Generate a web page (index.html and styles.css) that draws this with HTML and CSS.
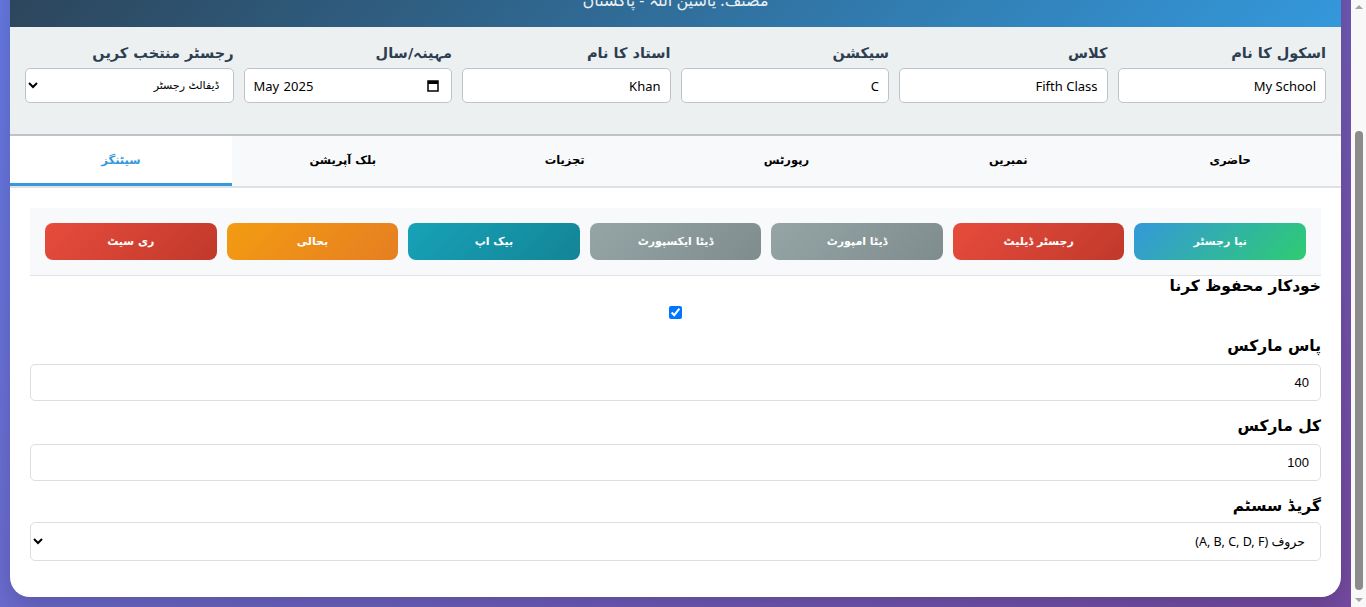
FILE: index.html
```html
<!DOCTYPE html>
<html lang="ur" dir="rtl">
<head>
<meta charset="UTF-8">
<title>اسکول رجسٹر</title>
<link rel="stylesheet" href="styles.css">
</head>
<body>
<div class="container">
  <header class="header">
    <h1 class="title">اسکول حاضری و نمبر رجسٹر</h1>
    <p class="subtitle">طلباء کی حاضری، نمبرات اور رپورٹس کا مکمل نظام</p>
    <p class="author">مصنف: یاسین اللہ - پاکستان</p>
  </header>

  <section class="controls">
    <div class="control-group">
      <label class="control-label">اسکول کا نام</label>
      <input class="control-input" type="text" value="My School">
    </div>
    <div class="control-group">
      <label class="control-label">کلاس</label>
      <input class="control-input" type="text" value="Fifth Class">
    </div>
    <div class="control-group">
      <label class="control-label">سیکشن</label>
      <input class="control-input" type="text" value="C">
    </div>
    <div class="control-group">
      <label class="control-label">استاد کا نام</label>
      <input class="control-input" type="text" value="Khan">
    </div>
    <div class="control-group">
      <label class="control-label">مہینہ/سال</label>
      <div class="control-input month-field">
        <span class="month-value">May 2025</span>
        <svg class="cal-icon" width="12" height="13" viewBox="0 0 12 13" aria-hidden="true">
          <rect x="1" y="2" width="10" height="10" fill="none" stroke="#000" stroke-width="1.5"/>
          <rect x="1" y="2" width="10" height="3" fill="#000"/>
        </svg>
      </div>
    </div>
    <div class="control-group">
      <label class="control-label">رجسٹر منتخب کریں</label>
      <select class="control-input control-select">
        <option>ڈیفالٹ رجسٹر</option>
      </select>
    </div>
  </section>

  <nav class="tabs">
    <button class="tab">حاضری</button>
    <button class="tab">نمبریں</button>
    <button class="tab">رپورٹس</button>
    <button class="tab">تجزیات</button>
    <button class="tab">بلک آپریشن</button>
    <button class="tab tab-active">سیٹنگز</button>
  </nav>

  <main class="tab-content">
    <div class="actions">
      <button class="action-btn btn-new">نیا رجسٹر</button>
      <button class="action-btn btn-danger">رجسٹر ڈیلیٹ</button>
      <button class="action-btn btn-gray">ڈیٹا امپورٹ</button>
      <button class="action-btn btn-gray">ڈیٹا ایکسپورٹ</button>
      <button class="action-btn btn-info">بیک اپ</button>
      <button class="action-btn btn-warning">بحالی</button>
      <button class="action-btn btn-danger">ری سیٹ</button>
    </div>

    <div class="setting-item">
      <label class="setting-label">خودکار محفوظ کرنا</label>
      <div class="check-row">
        <input class="setting-check" type="checkbox" checked>
      </div>
    </div>
    <div class="setting-item">
      <label class="setting-label">پاس مارکس</label>
      <input class="setting-input" type="number" value="40">
    </div>
    <div class="setting-item">
      <label class="setting-label">کل مارکس</label>
      <input class="setting-input" type="number" value="100">
    </div>
    <div class="setting-item">
      <label class="setting-label setting-label-tight">گریڈ سسٹم</label>
      <select class="setting-input setting-select">
        <option>حروف (A, B, C, D, F)</option>
        <option>فیصد</option>
      </select>
    </div>
  </main>
</div>

<div class="scrollbar" aria-hidden="true">
  <span class="sb-arrow sb-up"></span>
  <span class="sb-thumb"></span>
  <span class="sb-arrow sb-down"></span>
</div>
<script src="script.js"></script>
</body>
</html>
```

FILE: styles.css
```css
* {
  box-sizing: border-box;
}

html {
  background: #6c5fc0;
}

body {
  margin: 0;
  padding: 10px 25px 10px 10px;
  font-family: "Noto Sans", "DejaVu Sans", sans-serif;
  background: linear-gradient(135deg, #667eea 0%, #764ba2 100%);
  min-height: 100vh;
}

/* imitation of the window scrollbar, drawn over the page edge */
.scrollbar {
  position: fixed;
  top: 0;
  right: 0;
  bottom: 0;
  width: 15px;
  background: #f8f8f8;
  display: flex;
  flex-direction: column;
  align-items: center;
}

.sb-arrow {
  width: 0;
  height: 0;
  border-left: 4px solid transparent;
  border-right: 4px solid transparent;
}

.sb-up {
  margin-top: 5px;
  border-bottom: 4px solid #a3a3a3;
}

.sb-down {
  margin-bottom: 5px;
  border-top: 4px solid #a3a3a3;
}

.sb-thumb {
  flex: 1;
  width: 8px;
  margin: 122px 0 8px;
  background: #8b8b8b;
  border-radius: 4px;
}

.container {
  background: #fff;
  border-radius: 20px;
  overflow: hidden;
  box-shadow: 0 10px 30px rgba(0, 0, 0, 0.2);
}

.header {
  background: linear-gradient(135deg, #2c3e50 0%, #3498db 100%);
  color: #fff;
  text-align: center;
  padding: 22px 20px 15px;
}

.title {
  margin: 0 0 10px;
  font-size: 30px;
  line-height: 44px;
}

.subtitle {
  margin: 0 0 12px;
  font-size: 16px;
  line-height: 26px;
  opacity: 0.9;
}

.author {
  margin: 0;
  font-size: 16px;
  line-height: 24px;
  opacity: 0.9;
}

.controls {
  background: #ecf0f1;
  padding: 16px 15px 31px;
  border-bottom: 2px solid #bdc3c7;
  display: grid;
  grid-template-columns: repeat(6, 1fr);
  gap: 10px;
}

.control-group {
  display: flex;
  flex-direction: column;
}

.control-label {
  font-family: "DejaVu Sans", sans-serif;
  font-weight: bold;
  font-size: 14.5px;
  line-height: 20px;
  color: #2c3e50;
  margin-bottom: 5px;
}

.control-input {
  width: 100%;
  height: 35px;
  padding: 6px 9px;
  border: 1px solid #bdc3c7;
  border-radius: 5px;
  background: #fff;
  font-family: "Noto Sans", "DejaVu Sans", sans-serif;
  font-size: 13px;
  color: #000;
}

.month-field {
  direction: ltr;
  display: flex;
  align-items: center;
  justify-content: space-between;
  padding: 0 12px 0 9px;
}

.month-value {
  word-spacing: 1px;
}

.cal-icon {
  display: block;
}

.control-select {
  font-family: "DejaVu Sans", sans-serif;
  font-size: 11px;
}

.tabs {
  display: flex;
  background: #f8f9fa;
  border-bottom: 2px solid #dee2e6;
}

.tab {
  flex: 1;
  height: 50px;
  border: none;
  border-bottom: 3px solid transparent;
  background: transparent;
  font-family: "DejaVu Sans", sans-serif;
  font-size: 11.5px;
  font-weight: bold;
  color: #000;
  padding: 0 10px;
}

.tab-active {
  background: #fff;
  color: #3498db;
  border-bottom-color: #3498db;
}

.tab-content {
  padding: 20px 20px 21px;
}

.actions {
  background: #f8f9fa;
  padding: 15px;
  border-bottom: 1px solid #dee2e6;
  display: grid;
  grid-template-columns: repeat(7, 1fr);
  gap: 10px;
}

.action-btn {
  height: 37px;
  border: none;
  border-radius: 8px;
  color: #fff;
  font-family: "DejaVu Sans", sans-serif;
  font-size: 11px;
  font-weight: bold;
}

.btn-new {
  background: linear-gradient(135deg, #3498db, #2ecc71);
}

.btn-danger {
  background: linear-gradient(135deg, #e74c3c, #c0392b);
}

.btn-gray {
  background: linear-gradient(135deg, #95a5a6, #7f8c8d);
}

.btn-info {
  background: linear-gradient(135deg, #17a2b8, #138496);
}

.btn-warning {
  background: linear-gradient(135deg, #f39c12, #e67e22);
}

.setting-item {
  margin-bottom: 15px;
}

.setting-label {
  display: block;
  font-family: "DejaVu Sans", sans-serif;
  font-weight: bold;
  font-size: 15.5px;
  line-height: 20px;
  color: #000;
  margin-bottom: 8px;
}

.setting-label-tight {
  margin-bottom: 6px;
}

.check-row {
  display: flex;
  justify-content: center;
  padding: 2px 0 2px;
}

.setting-check {
  display: block;
  width: 13px;
  height: 13px;
  margin: 0;
}

.setting-input {
  width: 100%;
  height: 37px;
  padding: 8px 11px;
  border: 1px solid #ddd;
  border-radius: 5px;
  background: #fff;
  font-family: "Liberation Sans", sans-serif;
  font-size: 13px;
  color: #000;
}

.setting-select {
  height: 39px;
  font-family: "Noto Sans", "DejaVu Sans", sans-serif;
  font-size: 12.5px;
}
```

FILE: script.js
```js
function scrollToEnd() {
  window.scrollTo(0, document.documentElement.scrollHeight);
}
scrollToEnd();
window.addEventListener('load', scrollToEnd);
```
